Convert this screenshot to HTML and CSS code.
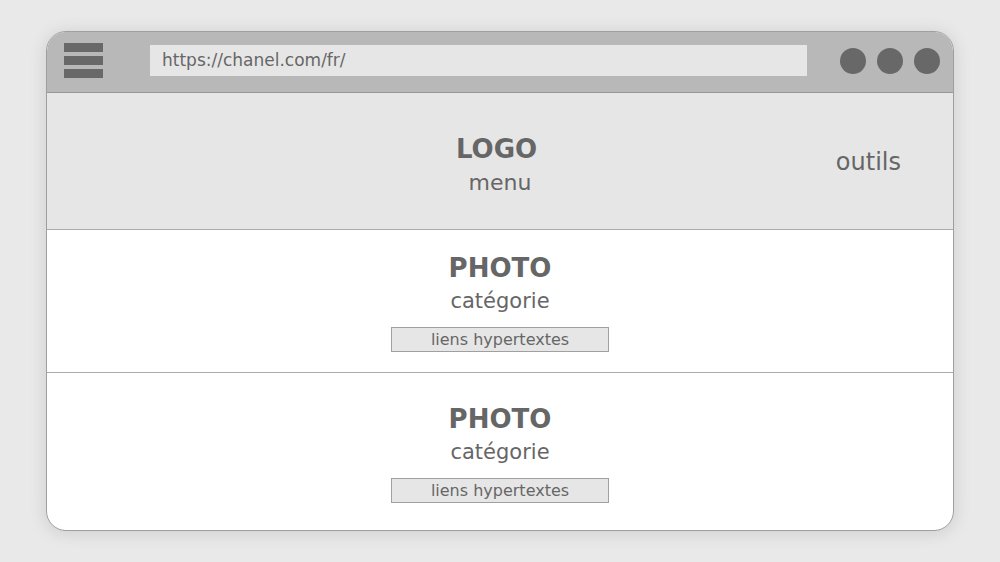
FILE: index.html
```html
<!DOCTYPE html>
<html lang="fr">
<head>
<meta charset="utf-8">
<title>Maquette</title>
<link rel="stylesheet" href="styles.css">
</head>
<body>
<div class="window">
  <div class="titlebar">
    <div class="burger"><span></span><span></span><span></span></div>
    <div class="url">https://chanel.com/fr/</div>
    <div class="dots"><span></span><span></span><span></span></div>
  </div>
  <div class="header">
    <div class="brand">
      <div class="logo">LOGO</div>
      <div class="menu">menu</div>
    </div>
    <div class="tools">outils</div>
  </div>
  <div class="section first">
    <div class="photo">PHOTO</div>
    <div class="cat">catégorie</div>
    <div class="links">liens hypertextes</div>
  </div>
  <div class="section second">
    <div class="photo">PHOTO</div>
    <div class="cat">catégorie</div>
    <div class="links">liens hypertextes</div>
  </div>
</div>
</body>
</html>
```
FILE: styles.css
```css
html, body {
  margin: 0;
  height: 100%;
}
body {
  background: #e9e9e9;
  font-family: "DejaVu Sans", "Noto Sans", sans-serif;
  color: #666;
  padding: 31px 0 0 46px;
  box-sizing: border-box;
}
.window {
  width: 908px;
  height: 500px;
  box-sizing: border-box;
  border: 1px solid #9f9f9f;
  border-radius: 20px;
  overflow: hidden;
  background: #fff;
  display: flex;
  flex-direction: column;
  box-shadow: 0 2px 18px rgba(0, 0, 0, 0.12);
}
.titlebar {
  height: 61px;
  flex: none;
  box-sizing: border-box;
  background: #b8b8b8;
  border-bottom: 1px solid #979797;
  display: flex;
  align-items: center;
  padding: 0 13px 3px 17px;
}
.burger {
  display: flex;
  flex-direction: column;
  gap: 4px;
  width: 39px;
  flex: none;
}
.burger span {
  height: 9px;
  background: #686868;
}
.url {
  margin-left: 47px;
  width: 657px;
  height: 31px;
  background: #e6e6e6;
  font-size: 17px;
  line-height: 31px;
  padding-left: 12px;
  box-sizing: border-box;
  color: #666;
}
.dots {
  margin-left: auto;
  display: flex;
  gap: 11px;
  margin-top: 1px;
}
.dots span {
  width: 26px;
  height: 26px;
  border-radius: 50%;
  background: #686868;
}
.header {
  height: 137px;
  flex: none;
  box-sizing: border-box;
  background: #e6e6e6;
  border-bottom: 1px solid #ababab;
  display: grid;
  grid-template-columns: 1fr auto 1fr;
  align-items: center;
}
.brand {
  grid-column: 2;
  text-align: center;
  padding-top: 8px;
}
.logo {
  font-weight: bold;
  font-size: 26px;
  line-height: 32px;
  margin-left: -7px;
}
.menu {
  font-size: 22px;
  line-height: 30px;
  margin-top: 3px;
}
.tools {
  grid-column: 3;
  justify-self: end;
  margin-right: 52px;
  font-size: 24px;
  padding-top: 2px;
}
.section {
  display: flex;
  flex-direction: column;
  align-items: center;
  justify-content: center;
}
.section.first {
  height: 143px;
  box-sizing: border-box;
  flex: none;
  border-bottom: 1px solid #ababab;
  padding-top: 2px;
}
.section.second {
  flex: 1;
  padding-top: 2px;
}
.photo {
  font-weight: bold;
  font-size: 26px;
  line-height: 32px;
}
.cat {
  font-size: 21px;
  line-height: 34px;
}
.links {
  margin-top: 9px;
  width: 218px;
  height: 25px;
  box-sizing: border-box;
  background: #e6e6e6;
  border: 1px solid #a0a0a0;
  text-align: center;
  font-size: 16px;
  line-height: 23px;
}
```
